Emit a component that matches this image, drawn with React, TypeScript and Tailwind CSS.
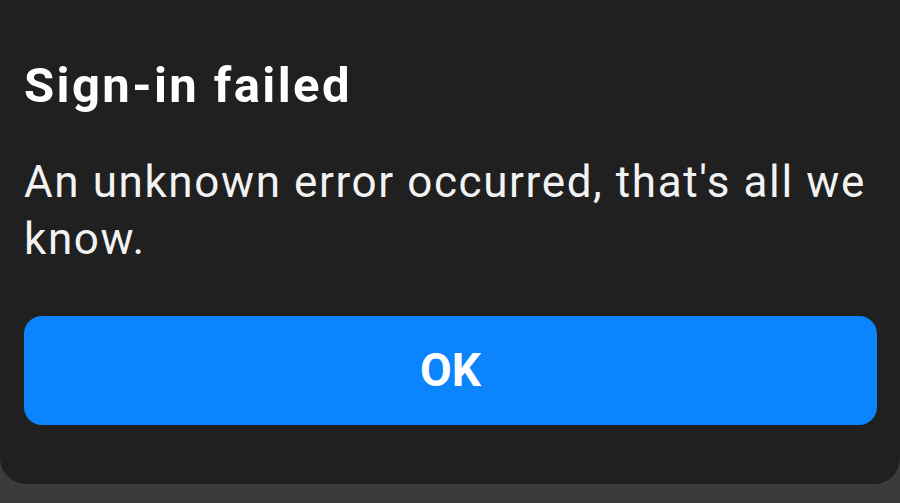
import React from 'react';

export default function App() {
    return (
        <div className="h-[503px] w-[900px] overflow-hidden bg-[#3b3b3b] font-['Roboto',sans-serif]">
            <div className="flex h-[484px] flex-col rounded-b-[26px] bg-[#202020] pl-[24px] pr-[23px] pt-[59px]">
                <h1 className="text-[49px] font-bold leading-[54px] tracking-[2.4px] text-white">
                    Sign-in failed
                </h1>
                <p className="mt-[41px] text-[44px] leading-[57px] tracking-[1.6px] text-[#f2f2f2]">
                    An unknown error occurred, that's all we know.
                </p>
                <button
                    type="button"
                    className="mt-[48px] flex h-[109px] w-full items-center justify-center rounded-[18px] bg-[#0b84fe] text-[46px] font-bold text-white"
                >
                    OK
                </button>
            </div>
        </div>
    );
}
